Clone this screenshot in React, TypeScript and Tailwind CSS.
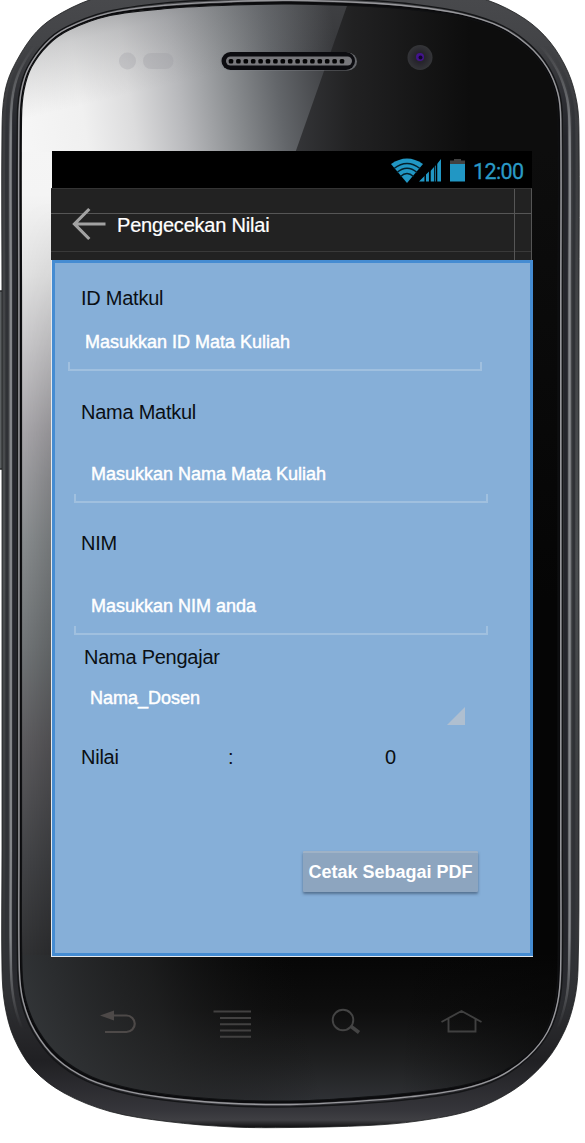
import React from "react";

type Pt = [number, number];

/* Outline of the metal case, clockwise from the left side. */
const OUTER: Pt[] = [
  [2, 560], [2, 300], [2, 128], [4.5, 94], [12, 70], [32, 37], [53, 18], [92, -1], [150, -16], [220, -22], [290, -24],
  [370, -21], [430, -14], [487, 0], [525, 19], [550, 42], [568, 72], [577, 103], [579, 135], [579, 300], [579, 560],
  [579, 850], [578, 970], [574.5, 1000], [565, 1030], [546, 1061], [515, 1089], [472, 1110], [418, 1121], [368, 1125.5], [290, 1127.5],
  [233, 1127], [167, 1121.5], [110, 1111.5], [64, 1093], [33, 1069], [14, 1038], [5, 1006], [2, 970], [2, 850],
];

/* Outline of the front glass, point for point with the case. */
const INNER: Pt[] = [
  [21.5, 560], [21.5, 300], [21.5, 118], [24, 90], [31.5, 67], [48, 45], [69, 30], [110, 15.5], [167, 8.5], [233, 5], [290, 4],
  [360, 6], [410, 9.5], [457, 16], [497, 28], [525, 46], [544, 67], [555, 92], [558, 118], [558, 300], [558, 560],
  [558, 850], [558, 970], [555, 1003], [545, 1032], [525, 1056], [496, 1075], [460, 1086], [410, 1093], [352, 1098], [290, 1101],
  [233, 1100], [180, 1096], [133, 1089], [92, 1077], [60, 1057], [38, 1030], [26, 1001], [22, 970], [21.5, 850],
];

function outline(t: number): string {
  const p = OUTER.map((o, i): Pt => [o[0] + (INNER[i][0] - o[0]) * t, o[1] + (INNER[i][1] - o[1]) * t]);
  const n = p.length;
  let d = `M${p[0][0]} ${p[0][1]}`;
  for (let i = 0; i < n; i++) {
    const a = p[(i - 1 + n) % n], b = p[i], c = p[(i + 1) % n], e = p[(i + 2) % n];
    // Tangents weighted by segment length keep the long straight sides from overshooting.
    const l1 = Math.hypot(b[0] - a[0], b[1] - a[1]);
    const l2 = Math.hypot(c[0] - b[0], c[1] - b[1]);
    const l3 = Math.hypot(e[0] - c[0], e[1] - c[1]);
    const k1 = l2 / (l1 + l2) / 3, k2 = l2 / (l2 + l3) / 3;
    d += `C${b[0] + (c[0] - a[0]) * k1} ${b[1] + (c[1] - a[1]) * k1} ${c[0] - (e[0] - b[0]) * k2} ${c[1] - (e[1] - b[1]) * k2} ${c[0]} ${c[1]}`;
  }
  return d + "Z";
}

function PhoneBody() {
  const glass = outline(1);
  const holes = Array.from({ length: 16 }, (_, i) => 231 + i * 7.4);
  return (
    <svg className="absolute inset-0" width="585" height="1143" viewBox="0 0 585 1143" aria-hidden="true">
      <defs>
        <clipPath id="glassClip"><path d={glass} /></clipPath>
        <linearGradient id="caseFill" x1="0" y1="0" x2="0" y2="1128" gradientUnits="userSpaceOnUse">
          <stop offset="0" stopColor="#48494c" /><stop offset="0.1" stopColor="#3b3c3f" />
          <stop offset="0.5" stopColor="#4c4f51" /><stop offset="0.88" stopColor="#303134" />
          <stop offset="0.94" stopColor="#202023" /><stop offset="0.984" stopColor="#35353a" /><stop offset="0.993" stopColor="#3f3f43" /><stop offset="1" stopColor="#0c0c0d" />
        </linearGradient>
        <linearGradient id="sides" x1="0" y1="0" x2="0" y2="1143" gradientUnits="userSpaceOnUse">
          <stop offset="0.04" stopColor="#fff" stopOpacity="0" /><stop offset="0.12" stopColor="#fff" />
          <stop offset="0.82" stopColor="#fff" /><stop offset="0.9" stopColor="#fff" stopOpacity="0" />
        </linearGradient>
        <mask id="sideMask" maskUnits="userSpaceOnUse" x="0" y="0" width="585" height="1143"><rect width="585" height="1143" fill="url(#sides)" /></mask>
        <linearGradient id="leftFall" x1="0" y1="0" x2="0" y2="1143" gradientUnits="userSpaceOnUse">
          <stop offset="0" stopColor="#f8f8f8" /><stop offset="0.17" stopColor="#f4f4f4" /><stop offset="0.24" stopColor="#e2e2e2" />
          <stop offset="0.3" stopColor="#cac9cb" /><stop offset="0.38" stopColor="#a8a6aa" /><stop offset="0.47" stopColor="#8a8e90" />
          <stop offset="0.57" stopColor="#717577" /><stop offset="0.65" stopColor="#5d5c5f" /><stop offset="0.75" stopColor="#444548" />
          <stop offset="0.84" stopColor="#303133" /><stop offset="1" stopColor="#303336" />
        </linearGradient>
        <linearGradient id="stripShade" x1="22" y1="0" x2="52" y2="0" gradientUnits="userSpaceOnUse">
          <stop offset="0" stopColor="#000" stopOpacity="0" /><stop offset="1" stopColor="#000" stopOpacity="0.16" />
        </linearGradient>
        <linearGradient id="shadeFade" x1="0" y1="200" x2="0" y2="480" gradientUnits="userSpaceOnUse">
          <stop offset="0" stopColor="#fff" stopOpacity="0" /><stop offset="1" stopColor="#fff" />
        </linearGradient>
        <mask id="shadeMask" maskUnits="userSpaceOnUse" x="0" y="150" width="60" height="900"><rect y="150" width="60" height="900" fill="url(#shadeFade)" /></mask>
        <linearGradient id="topGlow" x1="22" y1="150" x2="345" y2="100" gradientUnits="userSpaceOnUse">
          <stop offset="0" stopColor="#f6f6f6" /><stop offset="0.2" stopColor="#f0f0f0" /><stop offset="0.35" stopColor="#dcdcdd" />
          <stop offset="0.5" stopColor="#b8b9bc" /><stop offset="0.66" stopColor="#8a8d90" /><stop offset="0.8" stopColor="#63666a" />
          <stop offset="1" stopColor="#37383b" />
        </linearGradient>
        <linearGradient id="topShade" x1="60" y1="0" x2="85" y2="105" gradientUnits="userSpaceOnUse">
          <stop offset="0" stopColor="#3c3e42" stopOpacity="0.5" /><stop offset="0.4" stopColor="#606266" stopOpacity="0.24" /><stop offset="1" stopColor="#777" stopOpacity="0" />
        </linearGradient>
        <linearGradient id="darkGlass" x1="290" y1="0" x2="470" y2="0" gradientUnits="userSpaceOnUse">
          <stop offset="0" stopColor="#36373a" /><stop offset="0.35" stopColor="#212122" /><stop offset="1" stopColor="#0d0d0d" />
        </linearGradient>
        <linearGradient id="rightGlass" x1="0" y1="0" x2="0" y2="600" gradientUnits="userSpaceOnUse">
          <stop offset="0.25" stopColor="#0d0d0d" /><stop offset="1" stopColor="#050505" />
        </linearGradient>
        <linearGradient id="bottomV" x1="0" y1="950" x2="0" y2="1102" gradientUnits="userSpaceOnUse">
          <stop offset="0" stopColor="#050505" /><stop offset="0.4" stopColor="#0e0e0e" /><stop offset="0.75" stopColor="#202122" /><stop offset="1" stopColor="#303236" />
        </linearGradient>
        <linearGradient id="bottomL" x1="22" y1="1050" x2="300" y2="990" gradientUnits="userSpaceOnUse">
          <stop offset="0" stopColor="#36393c" stopOpacity="0.95" /><stop offset="0.5" stopColor="#262728" stopOpacity="0.65" /><stop offset="1" stopColor="#111" stopOpacity="0" />
        </linearGradient>
        <linearGradient id="bottomR" x1="400" y1="0" x2="558" y2="0" gradientUnits="userSpaceOnUse">
          <stop offset="0" stopColor="#050505" stopOpacity="0" /><stop offset="1" stopColor="#050505" stopOpacity="0.55" />
        </linearGradient>
        <radialGradient id="lens"><stop offset="0" stopColor="#2a2140" /><stop offset="0.4" stopColor="#26242c" /><stop offset="1" stopColor="#343538" /></radialGradient>
      </defs>

      <rect x="-2" y="291" width="6" height="178" fill="#5b5f61" stroke="#2b2c2e" strokeWidth="1.5" />
      <path d={outline(0)} fill="url(#caseFill)" stroke="#1d1e20" strokeWidth="0.8" />
      <g fill="none">
        <g mask="url(#sideMask)">
          <path d={outline(0.25)} stroke="#303236" strokeWidth="3" />
          <path d={outline(0.45)} stroke="#85878b" strokeWidth="2.4" />
          <path d={outline(0.64)} stroke="#24252b" strokeWidth="4" />
        </g>
        <path d={outline(0.96)} stroke="#0b0b0d" strokeWidth="2.6" />
        <path d={outline(0.78)} stroke="#141517" strokeWidth="1.4" />
        <path d={outline(0.87)} stroke="#98989c" strokeWidth="1.4" />
      </g>

      <g clipPath="url(#glassClip)">
        <rect width="585" height="1143" fill="url(#rightGlass)" />
        <rect width="52" height="1143" fill="url(#leftFall)" />
        <rect y="151" width="52" height="810" fill="url(#stripShade)" mask="url(#shadeMask)" />
        <rect x="290" width="295" height="152" fill="url(#darkGlass)" />
        <path d="M0 0H349L295.500 152H0Z" fill="url(#topGlow)" />
        <path d="M0 0H349L295.500 152H0Z" fill="url(#topShade)" />
        <rect x="20" y="955" width="545" height="150" fill="url(#bottomV)" />
        <rect x="20" y="955" width="300" height="150" fill="url(#bottomL)" />
        <rect x="400" y="955" width="165" height="150" fill="url(#bottomR)" />
      </g>
      <path d={glass} fill="none" stroke="#101113" strokeWidth="1.2" />

      <circle cx="127.500" cy="61" r="8.500" fill="#9a9aa2" opacity="0.3" />
      <rect x="143" y="53" width="30.500" height="16" rx="8" fill="#9a9aa2" opacity="0.32" />

      <rect x="220" y="52.500" width="137" height="18" rx="9" fill="#85878b" opacity="0.7" />
      <rect x="221.500" y="52" width="133.500" height="18" rx="9" fill="#0c0c10" />
      <rect x="226" y="56.500" width="126" height="9" rx="4.500" fill="#77777b" />
      {holes.map((x) => <rect key={x} x={x - 2.3} y="59" width="4.600" height="4.600" rx="1.500" fill="#050506" />)}

      <circle cx="420" cy="57.500" r="12.500" fill="url(#lens)" />
      <circle cx="420" cy="57" r="4" fill="#43148c" />
      <circle cx="420.500" cy="57.500" r="2" fill="#11062c" />

      <g fill="none" stroke="#4d4948" strokeWidth="2.200">
        <path d="M112 1015.500H126.500A7.800 7.800 0 0 1 126.500 1032H105" />
        <path d="M100 1015.500L114 1010.500V1020.500Z" fill="#4d4948" stroke="none" />
        <path d="M213.500 1011.500H251M220 1018H251M220 1024.300H251M220 1030.500H251M220 1036.700H251" stroke="#424141" strokeWidth="2" />
        <circle cx="343" cy="1020" r="10.300" stroke="#444" strokeWidth="1.900" />
        <path d="M350.500 1026L359 1032.500" stroke="#444" strokeWidth="3.500" />
        <path d="M441.500 1022L461.500 1011L481.500 1022M448.500 1018V1031.500H475.500V1018" stroke="#404040" strokeWidth="1.900" />
      </g>
    </svg>
  );
}

function StatusBar() {
  return (
    <div className="ml-px flex h-[37px] w-[480px] items-start justify-end bg-black pr-[8.500px] pt-[7px]">
      <svg width="75" height="26" viewBox="0 0 75 26" className="mr-[7px] shrink-0" aria-hidden="true">
        <g fill="#2197c4">
          <path d="M0 6Q16 -5 32 6L16 25Z" />
          <path d="M28 23.500L34 17.500V23.500ZM34.500 17L38 13.500V23.500H34.500ZM39.500 13L43 9V23.500H39.500ZM43.800 8.500L45 7V23.500H43.800ZM46 6L50 1V23.500H46Z" />
          <path d="M59 6H74V23.500H59Z" />
        </g>
        <g fill="none" stroke="#05202b" strokeWidth="1.500">
          <path d="M3 10.500Q16 0.500 29 10.500M6 14.500Q16 6 26 14.500M9.500 18.500Q16 12.500 22.500 18.500" />
          <path d="M34.200 13V24M38.700 9V24M45.500 3V24" stroke="#000" />
        </g>
        <path d="M59 2.500H63V1H70V2.500H74V6H59Z" fill="#424242" />
      </svg>
      <span className="mt-px font-[Roboto,sans-serif] text-[21.500px] leading-[26px] tracking-[-0.600px] text-[#2a9ac6] [-webkit-text-stroke:0.300px_#2a9ac6]">12:00</span>
    </div>
  );
}

function ActionBar() {
  return (
    <header className="relative flex h-[72px] w-[481px] items-center border-r border-t border-r-[#555] border-t-[#343434] bg-[#222222]">
      <div className="absolute left-0 top-[24px] h-px w-full bg-[#565656]" />
      <div className="absolute left-0 top-[62px] h-px w-full bg-[#393939]" />
      <div className="absolute left-[463px] top-0 h-full w-px bg-[#565656]" />
      <svg width="36" height="34" viewBox="0 0 36 34" className="relative -mt-[2px] ml-[20px] shrink-0" fill="none" stroke="#a2a2a2" strokeWidth="3.200" aria-hidden="true">
        <path d="M18.300 2L3.500 17L18.300 32M3.500 17H34.500" />
      </svg>
      <h1 className="relative ml-[10px] text-[20px] leading-6 tracking-[-0.200px] text-white [-webkit-text-stroke:0.200px_white]">Pengecekan Nilai</h1>
    </header>
  );
}

const labelClass = "text-[20px] leading-6 tracking-[-0.250px] text-[#0b0f14]";
const valueClass = "text-[18px] leading-6 text-white [-webkit-text-stroke:0.450px_white]";

function Field({ text, className }: { text: string; className: string }) {
  return (
    <div className={`flex h-[41px] w-[414px] flex-col justify-between ${className}`}>
      <span className={`pl-[17px] ${valueClass}`}>{text}</span>
      <div className="h-[9px] border-x-2 border-b-2 border-[#a0c0df]" />
    </div>
  );
}

export default function App() {
  return (
    <div className="relative h-[1143px] w-[585px] overflow-hidden bg-white font-['Liberation_Sans',Arial,sans-serif]">
      <PhoneBody />
      <div className="relative ml-[51px] flex w-[482px] flex-col pt-[151px]">
        <StatusBar />
        <ActionBar />
        <div className="h-[697px] border-b border-l border-[#e4e8ec]">
          <main className="flex h-full flex-col border-[3px] border-[#458cd2] bg-[#86afd8]">
            <label className={`ml-[26px] mt-[23px] ${labelClass}`}>ID Matkul</label>
            <Field text="Masukkan ID Mata Kuliah" className="ml-[13px] mt-[20px]" />
            <label className={`ml-[26px] mt-[29px] ${labelClass}`}>Nama Matkul</label>
            <Field text="Masukkan Nama Mata Kuliah" className="ml-[19px] mt-[38px]" />
            <label className={`ml-[26px] mt-[28px] ${labelClass}`}>NIM</label>
            <Field text="Masukkan NIM anda" className="ml-[19px] mt-[39px]" />
            <label className={`ml-[29px] mt-[10px] ${labelClass}`}>Nama Pengajar</label>
            <div className="ml-[35px] mt-[17px] flex h-[39px] w-[375px] items-start justify-between">
              <span className={valueClass}>Nama_Dosen</span>
              <svg width="18" height="18" viewBox="0 0 18 18" className="self-end" aria-hidden="true"><path d="M18 0V18H0Z" fill="#afbfd0" /></svg>
            </div>
            <div className={`ml-[26px] mt-[20px] flex ${labelClass}`}>
              <span className="w-[147px]">Nilai</span>
              <span className="w-[157px]">:</span>
              <span>0</span>
            </div>
            <button className="ml-[248px] mt-[82px] h-[41px] w-[175px] rounded-[1px] border-t-2 border-[#9fb2c6] bg-[#8da5bf] pb-[2px] text-center text-[18px] font-bold leading-6 text-white shadow-[0_2px_3px_rgba(50,70,95,0.6)]">Cetak Sebagai PDF</button>
          </main>
        </div>
      </div>
    </div>
  );
}
